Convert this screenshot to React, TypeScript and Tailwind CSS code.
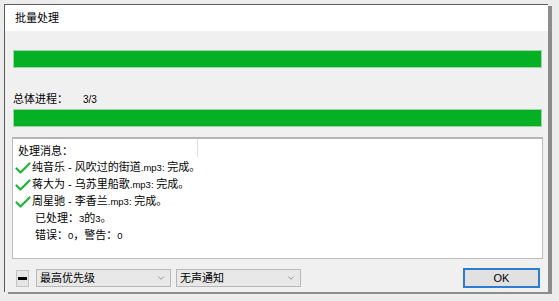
import { ChevronDown } from 'lucide-react';

const lines = [
	{ ok: true, text: '纯音乐 - 风吹过的街道', ext: '.mp3: ', tail: '完成。' },
	{ ok: true, text: '蒋大为 - 乌苏里船歌', ext: '.mp3: ', tail: '完成。' },
	{ ok: true, text: '周星驰 - 李香兰', ext: '.mp3: ', tail: '完成。' },
];

function Check() {
	return (
		<svg width="16" height="12" viewBox="0 0 16 12" className="shrink-0">
			<path d="M1.5 6.5 L5.5 10.5 L14.5 1.5" fill="none" stroke="#1fb33a" strokeWidth="2.2" strokeLinecap="round" strokeLinejoin="round" />
		</svg>
	);
}

function Select({ label, width }: { label: string; width: string }) {
	return (
		<div className={`${width} h-[18px] flex items-center justify-between border border-[#b8b8b8] bg-[#e8e8e8] pl-[3px] pr-[4px]`}>
			<span>{label}</span>
			<ChevronDown className="w-[10px] h-[10px] text-[#606060]" strokeWidth={1.5} />
		</div>
	);
}

export default function App() {
	return (
		<div
			className="w-[559px] h-[301px] bg-[#ececec] overflow-hidden pl-[4px] pt-[4px] text-[11px] text-black"
			style={{ fontFamily: '"Liberation Sans", "Noto Sans CJK SC", sans-serif' }}
		>
			<div className="w-[544px] h-[288px] border-l border-t border-[#5c5c5c] shadow-[4px_2px_0_#8c8c8c] flex flex-col bg-[#f0f0f0]">
				{/* title bar */}
				<div className="h-[26px] shrink-0 bg-white flex items-center pl-[10px] text-[11px]">批量处理</div>

				<div className="flex-1 flex flex-col pl-[8px] pr-[6px]">
					<div className="mt-[19px] h-[18px] bg-[#06b025] border border-[#9ed3a8]" />

					<div className="mt-[24px] h-[14px] flex items-center">
						<span className="w-[70px]">总体进程：</span>
						<span className="text-[10px]">3/3</span>
					</div>

					<div className="mt-[3px] h-[18px] bg-[#06b025] border border-[#9ed3a8]" />

					{/* message log */}
					<div className="mt-[10px] h-[122px] ml-[-1px] mr-[-1px] bg-white border border-[#bdbdbd] border-t-[2px] border-t-[#b5b5b5] relative pl-[2px] pt-[4px] leading-[16px]">
						<div className="absolute left-[184px] top-0 w-px h-[18px] bg-[#e3e3e3]" />
						<div className="pl-[3px]">处理消息：</div>
						{lines.map((l) => (
							<div key={l.text} className="flex items-center gap-[1px]">
								<Check />
								<span>
									{l.text}
									<span className="text-[9.5px]">{l.ext}</span>
									{l.tail}
								</span>
							</div>
						))}
						<div className="pl-[20px]">
							已处理：<span className="text-[9.5px]">3</span>的<span className="text-[9.5px]">3</span>。
						</div>
						<div className="pl-[20px]">
							错误：<span className="text-[9.5px]">0</span>，警告：<span className="text-[9.5px]">0</span>
						</div>
					</div>

					{/* bottom bar */}
					<div className="mt-[9px] flex items-center">
						<div className="ml-[3px] w-[13px] h-[17px] bg-[#e5e5e5] border border-[#c4c4c4] flex items-center justify-center">
							<div className="w-[9px] h-[3px] bg-black" />
						</div>
						<div className="ml-[7px]">
							<Select label="最高优先级" width="w-[135px]" />
						</div>
						<div className="ml-[5px]">
							<Select label="无声通知" width="w-[125px]" />
						</div>
						<div className="ml-auto mr-[2px] w-[77px] h-[20px] border-2 border-[#2b7cd3] bg-[#e1e1e1] flex items-center justify-center">
							OK
						</div>
					</div>
				</div>
			</div>
		</div>
	);
}
